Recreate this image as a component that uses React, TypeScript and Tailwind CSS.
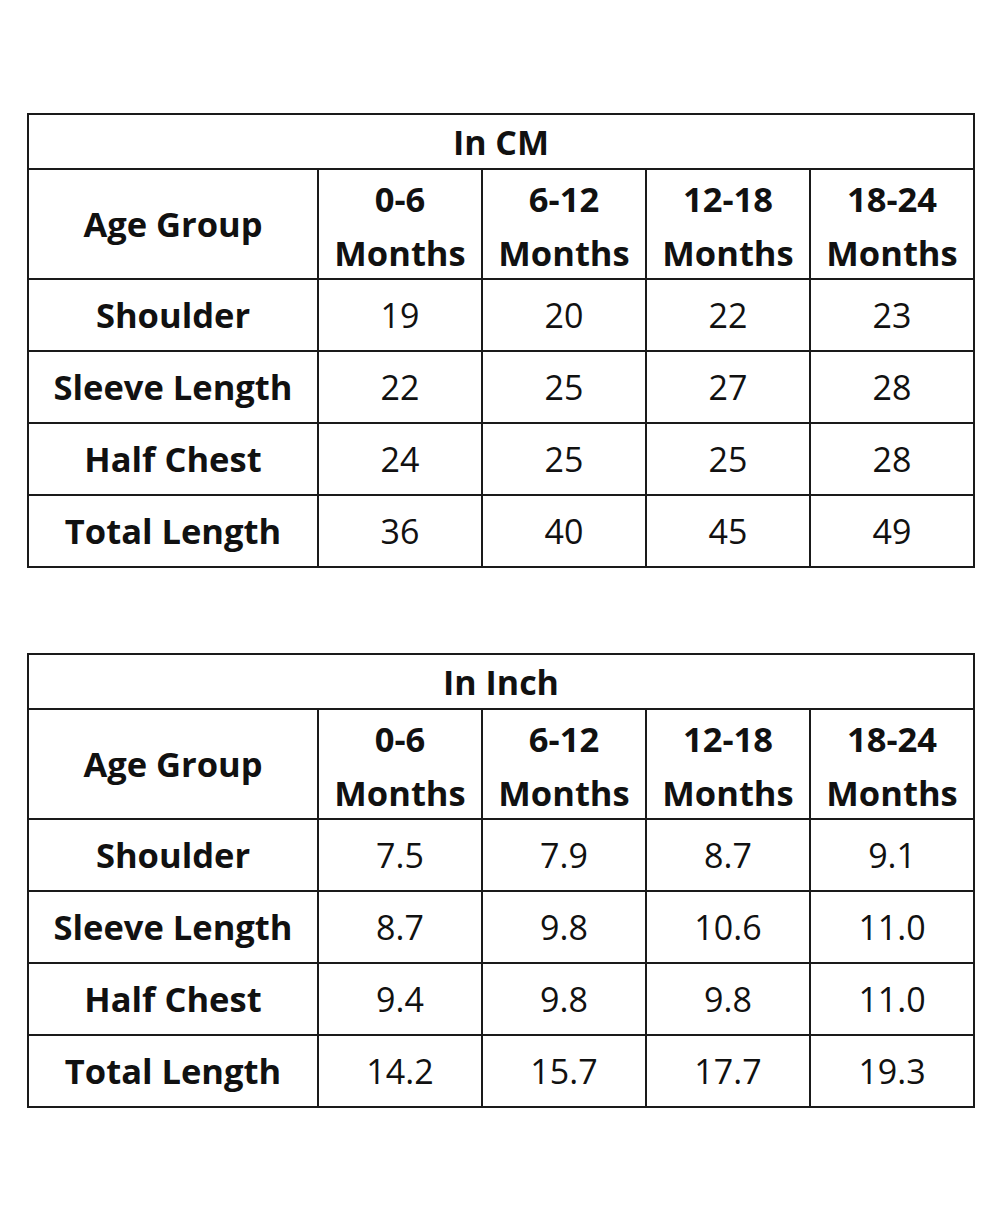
const cols = ['0-6', '6-12', '12-18', '18-24']

const tables = [
  {
    title: 'In CM',
    rows: [
      ['Shoulder', '19', '20', '22', '23'],
      ['Sleeve Length', '22', '25', '27', '28'],
      ['Half Chest', '24', '25', '25', '28'],
      ['Total Length', '36', '40', '45', '49'],
    ],
  },
  {
    title: 'In Inch',
    rows: [
      ['Shoulder', '7.5', '7.9', '8.7', '9.1'],
      ['Sleeve Length', '8.7', '9.8', '10.6', '11.0'],
      ['Half Chest', '9.4', '9.8', '9.8', '11.0'],
      ['Total Length', '14.2', '15.7', '17.7', '19.3'],
    ],
  },
]

function SizeTable({ title, rows }: { title: string; rows: string[][] }) {
  return (
    <table className="w-[946px] border-collapse table-fixed text-[#111]">
      <colgroup>
        <col className="w-[290px]" />
        <col className="w-[164px]" />
        <col className="w-[164px]" />
        <col className="w-[164px]" />
        <col className="w-[164px]" />
      </colgroup>
      <tbody>
        <tr className="h-[55px]">
          <td colSpan={5} className="border-2 border-[#1a1a1a] text-center font-bold text-[34px] leading-none">
            {title}
          </td>
        </tr>
        <tr className="h-[109px]">
          <td className="border-2 border-[#1a1a1a] text-center font-bold text-[34.5px] leading-none">Age Group</td>
          {cols.map((c) => (
            <td key={c} className="border-2 border-[#1a1a1a] text-center font-bold text-[34.5px] leading-[54px]">
              <div className="relative top-[2px]">
                {c}
                <br />
                Months
              </div>
            </td>
          ))}
        </tr>
        {rows.map((r) => (
          <tr key={r[0]} className="h-[72px]">
            {r.map((v, i) => (
              <td
                key={i}
                className={`border-2 border-[#1a1a1a] text-center leading-none ${
                  i === 0 ? 'font-bold text-[34.5px]' : 'text-[34px]'
                }`}
              >
                {v}
              </td>
            ))}
          </tr>
        ))}
      </tbody>
    </table>
  )
}

export default function App() {
  return (
    <div className="w-[1000px] h-[1212px] bg-white pt-[113px] pl-[27px] font-['Open_Sans',sans-serif]">
      <div className="flex flex-col gap-[85px]">
        {tables.map((t) => (
          <SizeTable key={t.title} title={t.title} rows={t.rows} />
        ))}
      </div>
    </div>
  )
}
